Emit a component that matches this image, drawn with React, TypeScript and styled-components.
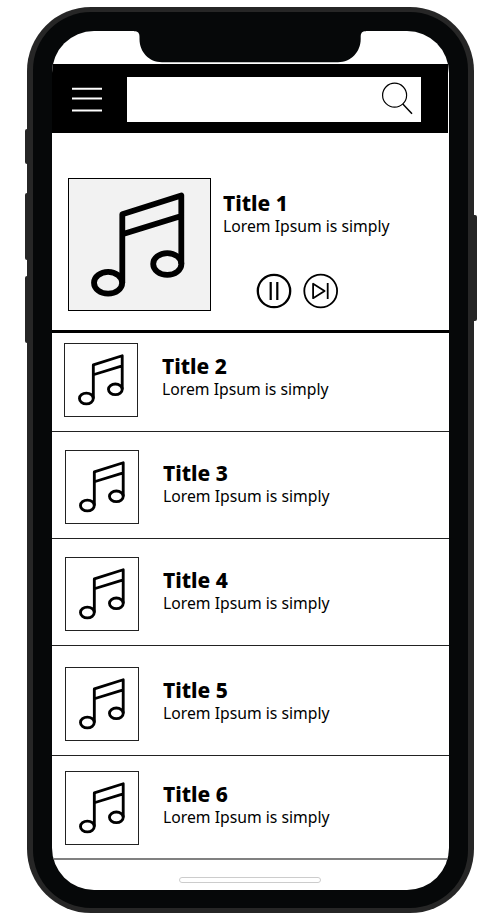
import React from "react";
import styled, { createGlobalStyle } from "styled-components";

const GlobalStyle = createGlobalStyle`
  * { box-sizing: border-box; }
  body { margin: 0; background: #fff; color: #000; font-family: "Noto Sans", "Open Sans", sans-serif; }
  h2, p { margin: 0; }
`;

const Page = styled.main`
  width: 500px;
  height: 918px;
  padding: 7px 0 0 27px;
  overflow: hidden;
`;

const Device = styled.div`
  position: relative;
  width: 446.5px;
  height: 905.5px;
  padding: 5px 5.5px 5px 6px;
  border-radius: 64px;
  background: #262626;
`;

const SideKey = styled.span<{ $side: "left" | "right"; $top: number; $height: number; $depth: number }>`
  position: absolute;
  ${(p) => p.$side}: ${(p) => -p.$depth}px;
  top: ${(p) => p.$top}px;
  width: ${(p) => p.$depth + 2}px;
  height: ${(p) => p.$height}px;
  border-radius: ${(p) => (p.$side === "left" ? "2px 0 0 2px" : "0 2px 2px 0")};
  background: #262626;
`;

const Bezel = styled.div`
  height: 100%;
  padding: 19px 19.5px 18px 18.5px;
  border-radius: 58px;
  background: #060809;
`;

const Screen = styled.div`
  position: relative;
  display: flex;
  flex-direction: column;
  height: 859px;
  border-radius: 42px;
  overflow: hidden;
  background: #fff;
`;

const Notch = styled.svg`
  position: absolute;
  left: 82.5px;
  top: 0;
`;

const Header = styled.header`
  display: flex;
  flex: none;
  align-items: flex-start;
  height: 69px;
  margin: 33px 1px 0 0;
  padding: 13px 0 0 20.5px;
  background: #000;
`;

const MenuButton = styled.button`
  width: 30px;
  height: 45px;
  margin-right: 25px;
  padding: 0;
  border: 0;
  background: none;
  svg { display: block; }
`;

const SearchField = styled.div`
  display: flex;
  justify-content: flex-end;
  width: 294px;
  height: 45px;
  background: #fff;
`;

const Featured = styled.section`
  display: flex;
  flex: none;
  height: 200px;
  padding: 44.5px 0 0 16.5px;
  border-bottom: 3px solid #000;
`;

const Cover = styled.div<{ $large?: boolean; $inset?: number }>`
  flex: none;
  width: ${(p) => (p.$large ? 143 : 74)}px;
  height: ${(p) => (p.$large ? 133.5 : 74)}px;
  padding: ${(p) => (p.$large ? "13px 0 0 22px" : `10px 0 0 ${p.$inset}px`)};
  border: 1px solid ${(p) => (p.$large ? "#000" : "#222")};
  background: ${(p) => (p.$large ? "#f2f2f2" : "#fff")};
  svg { display: block; }
`;

const FeaturedInfo = styled.div`
  padding: 9.5px 0 0 12px;
`;

const Title = styled.h2`
  width: max-content;
  font-size: 22px;
  font-weight: 800;
  line-height: 30px;
  transform: scaleX(0.952);
  transform-origin: 0 0;
`;

const Subtitle = styled.p`
  width: max-content;
  font-size: 17px;
  line-height: 18px;
  transform: scaleX(0.926);
  transform-origin: 0 0;
`;

const Controls = styled.div`
  display: flex;
  gap: 11px;
  padding: 37.5px 0 0 33px;
`;

const ControlButton = styled.button`
  width: 36px;
  height: 36px;
  padding: 0;
  border: 0;
  background: none;
  svg { display: block; }
`;

const Row = styled.article<{ $height: number; $top: number; $left: number; $last?: boolean }>`
  display: flex;
  flex: none;
  height: ${(p) => p.$height}px;
  padding: ${(p) => p.$top}px 0 0 ${(p) => p.$left}px;
  border-bottom: ${(p) => (p.$last ? "2px solid #808080" : "1px solid #222")};
`;

const RowInfo = styled.div`
  padding: 7px 0 0 24px;
`;

const HomeBar = styled.div`
  flex: none;
  width: 142px;
  height: 6px;
  margin: 17px 0 0 127px;
  border: 1px solid #ccc;
  border-radius: 3px;
`;

const NoteIcon = ({ width, height }: { width: number; height: number }) => (
  <svg width={width} height={height} viewBox="0 0 96 106" fill="none" stroke="#000" strokeWidth="5.8" strokeLinejoin="round">
    <path d="M31.3 91V22.3L90.3 3.5V72M31.3 42.3L90.3 24" />
    <ellipse cx="17.1" cy="90.8" rx="14.1" ry="10.9" />
    <ellipse cx="76.3" cy="72" rx="14.1" ry="10.9" />
  </svg>
);

const tracks = [
  { title: "Title 2", height: 99, top: 10, left: 12.5, inset: 13 },
  { title: "Title 3", height: 107, top: 18, left: 13.9, inset: 12.2 },
  { title: "Title 4", height: 107, top: 18, left: 13.9, inset: 12.2 },
  { title: "Title 5", height: 110, top: 21, left: 13.9, inset: 12.2 },
  { title: "Title 6", height: 104, top: 15, left: 13.9, inset: 12.2 },
];

export default function App() {
  return (
    <>
      <GlobalStyle />
      <Page>
        <Device>
          <SideKey $side="left" $top={121.5} $height={35} $depth={2} />
          <SideKey $side="left" $top={185.5} $height={67} $depth={2.5} />
          <SideKey $side="left" $top={269} $height={67} $depth={2.5} />
          <SideKey $side="right" $top={207.5} $height={106} $depth={3} />
          <Bezel>
            <Screen>
              <Notch width="232" height="33" viewBox="0 0 232 33">
                <path
                  d="M0 0H232V.3C228 .3 226.7 2 226.7 6V8C226.7 21 217 31.2 204 31.2H28C15 31.2 5.5 21 5.5 8V6C5.5 2 4 .3 0 .3Z"
                  fill="#060809"
                />
              </Notch>
              <Header>
                <MenuButton aria-label="Menu">
                  <svg width="30" height="45" viewBox="0 0 30 45" stroke="#fff" strokeWidth="2">
                    <path d="M0 11.7H30M0 21.6H30M0 33.4H30" />
                  </svg>
                </MenuButton>
                <SearchField role="search">
                  <svg width="44" height="45" viewBox="0 0 44 45" fill="none" stroke="#000" strokeWidth="1.2">
                    <circle cx="17.6" cy="18.2" r="12" />
                    <path d="M25.8 27L35 36.7" strokeWidth="1.5" />
                  </svg>
                </SearchField>
              </Header>
              <Featured>
                <Cover $large>
                  <NoteIcon width={96} height={106} />
                </Cover>
                <FeaturedInfo>
                  <Title>Title 1</Title>
                  <Subtitle>Lorem Ipsum is simply</Subtitle>
                  <Controls>
                    <ControlButton aria-label="Pause">
                      <svg width="36" height="36" viewBox="0 0 36 36" fill="none" stroke="#000" strokeWidth="2.3">
                        <circle cx="18" cy="18" r="16.2" />
                        <path d="M14.7 9V27M21.3 9V27" strokeWidth="2.2" />
                      </svg>
                    </ControlButton>
                    <ControlButton aria-label="Next">
                      <svg width="36" height="36" viewBox="0 0 36 36" fill="none" stroke="#000" strokeWidth="1.8">
                        <circle cx="17.7" cy="18" r="16.4" />
                        <path d="M10.1 10.8V25.2L21.6 18ZM24.7 10V26" strokeLinejoin="round" />
                      </svg>
                    </ControlButton>
                  </Controls>
                </FeaturedInfo>
              </Featured>
              {tracks.map((t, i) => (
                <Row key={t.title} $height={t.height} $top={t.top} $left={t.left} $last={i === tracks.length - 1}>
                  <Cover $inset={t.inset}>
                    <NoteIcon width={47} height={52} />
                  </Cover>
                  <RowInfo>
                    <Title>{t.title}</Title>
                    <Subtitle>Lorem Ipsum is simply</Subtitle>
                  </RowInfo>
                </Row>
              ))}
              <HomeBar />
            </Screen>
          </Bezel>
        </Device>
      </Page>
    </>
  );
}
